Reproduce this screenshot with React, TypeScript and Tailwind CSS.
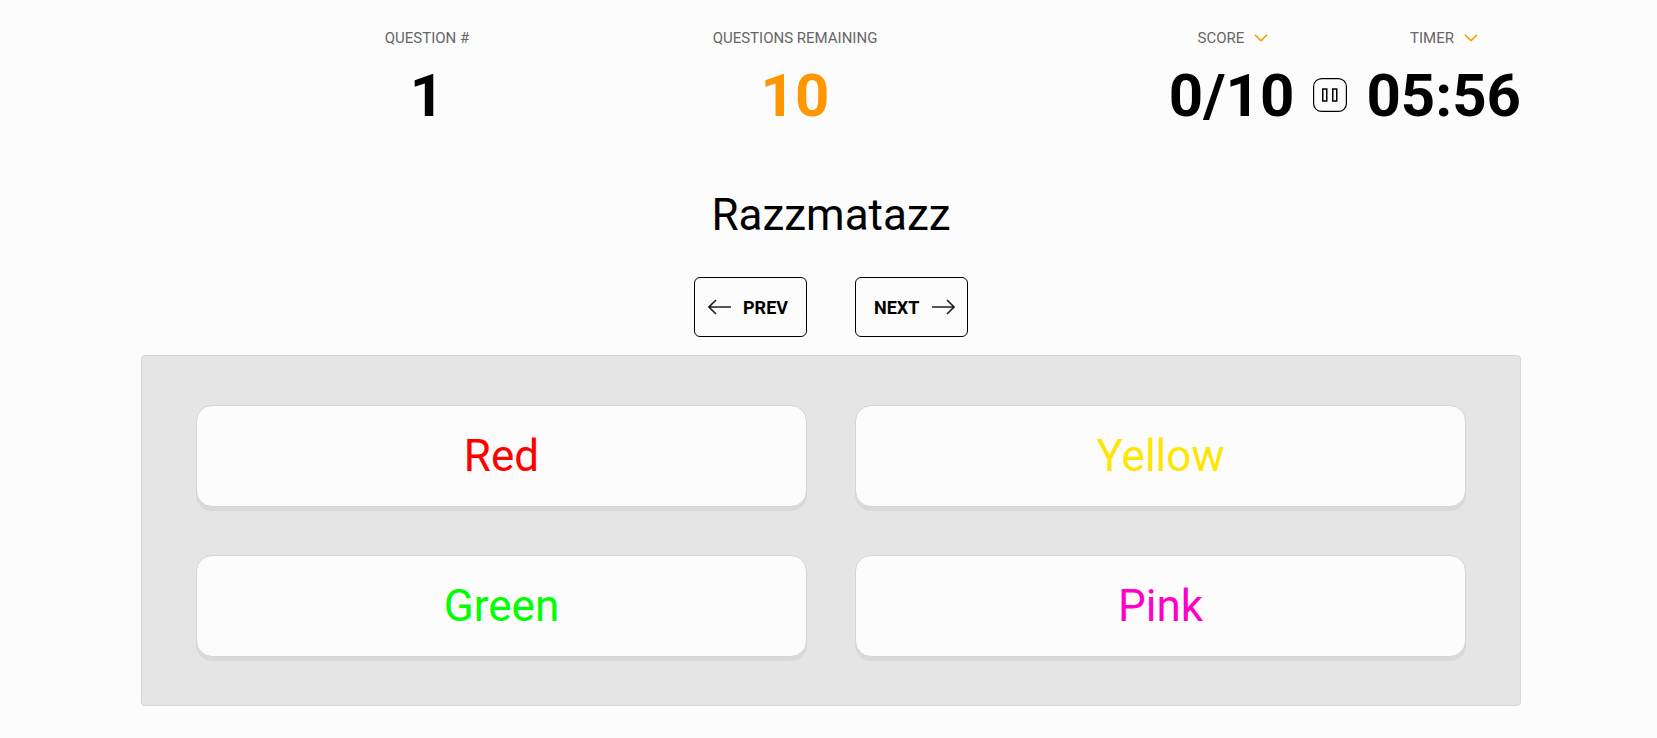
import { ChevronDown } from "lucide-react";

function Label({ text, arrow, className }: { text: string; arrow?: boolean; className: string }) {
  return (
    <div className={`flex justify-center ${className}`}>
      <div className="relative whitespace-nowrap text-[15px] leading-[20px] text-[#666]">
        {text}
        {arrow && <ChevronDown size={22} strokeWidth={1.75} className="absolute top-[-1px] -right-[28px] text-[#ff9800]" />}
      </div>
    </div>
  );
}

function Answer({ text, color }: { text: string; color: string }) {
  return (
    <button className={`h-[102px] rounded-[16px] border border-[#d4d4d4] bg-[#fcfcfc] text-[44px] shadow-[0_4px_0_#d9d9d9] ${color}`}>
      {text}
    </button>
  );
}

function Arrow({ flip }: { flip?: boolean }) {
  return (
    <svg width="23" height="16" viewBox="0 0 23 16" fill="none" stroke="#222" strokeWidth="1.6" className={flip ? "rotate-180" : ""}>
      <path d="M23 8H1M8 1L1 8L8 15" />
    </svg>
  );
}

function PauseIcon() {
  return (
    <svg width="34" height="34" viewBox="0 0 34 34" fill="none" stroke="#000" className="mx-[19px] mb-[2px]">
      <rect x="0.6" y="0.6" width="32.8" height="32.8" rx="8" strokeWidth="1.2" />
      <rect x="9.75" y="11" width="4" height="12" strokeWidth="1.5" />
      <rect x="19.75" y="11" width="4" height="12" strokeWidth="1.5" />
    </svg>
  );
}

export default function App() {
  return (
    <div className="min-h-[738px] overflow-hidden bg-[#fcfcfc] font-['Roboto',sans-serif] text-black">
      <div className="ml-[141px] w-[1380px]">
        <div className="flex h-[187px] pt-[28px]">
          <div className="w-[572px] pl-[244px] text-center">
            <Label text="QUESTION #" className="w-[84px]" />
            <div className="mt-[13px] w-[84px] text-[60px] leading-[70px] font-bold">1</div>
          </div>
          <div className="w-[270px] text-center">
            <Label text="QUESTIONS REMAINING" className="w-[164px]" />
            <div className="mt-[13px] w-[164px] text-[60px] leading-[70px] font-bold text-[#ff9800]">10</div>
          </div>
          <div className="ml-auto flex flex-col items-end">
            <div className="flex">
              <Label text="SCORE" arrow className="w-[272px]" />
              <Label text="TIMER" arrow className="mr-[14px] w-[150px]" />
            </div>
            <div className="mt-[13px] flex items-center text-[60px] leading-[70px] font-bold">
              <span>0/10</span>
              <PauseIcon />
              <span>05:56</span>
            </div>
          </div>
        </div>

        <h1 className="text-center text-[44px] leading-[56px] font-normal">Razzmatazz</h1>

        <div className="mt-[34px] flex justify-center gap-[48px]">
          <button className="flex h-[60px] w-[113px] items-center gap-[12px] rounded-[6px] border border-black pl-[13px] text-[18px] font-bold">
            <Arrow />
            PREV
          </button>
          <button className="flex h-[60px] w-[113px] items-center gap-[13px] rounded-[6px] border border-black pl-[18px] text-[18px] font-bold">
            NEXT
            <Arrow flip />
          </button>
        </div>

        <div className="mt-[18px] grid h-[351px] grid-cols-2 content-start gap-x-[48px] gap-y-[48px] rounded-[4px] border border-[#d6d6d6] bg-[#e5e5e5] px-[54px] pt-[49px]">
          <Answer text="Red" color="text-[#ff0000]" />
          <Answer text="Yellow" color="text-[#ffe600]" />
          <Answer text="Green" color="text-[#00ff00]" />
          <Answer text="Pink" color="text-[#ff00cc]" />
        </div>
      </div>
    </div>
  );
}
